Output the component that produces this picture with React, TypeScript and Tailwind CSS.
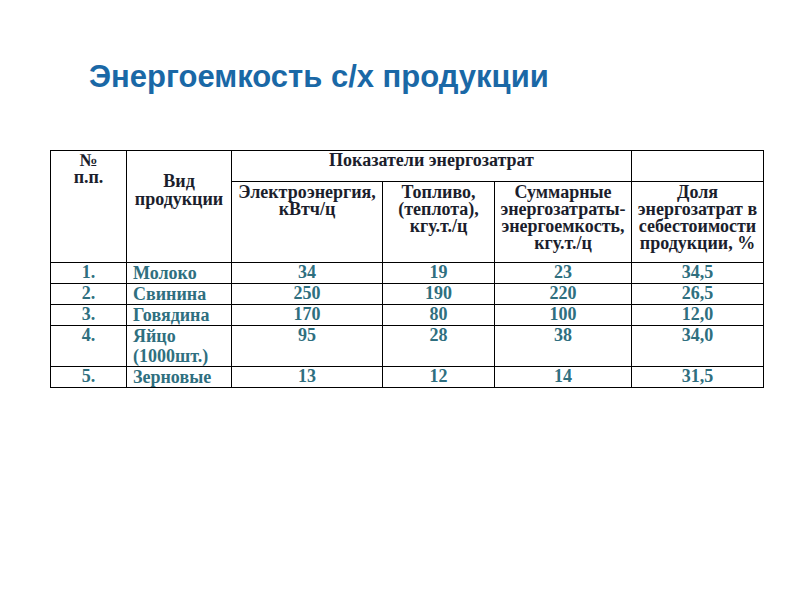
import React from "react";

const rows = [
  ["1.", "Молоко", "34", "19", "23", "34,5"],
  ["2.", "Свинина", "250", "190", "220", "26,5"],
  ["3.", "Говядина", "170", "80", "100", "12,0"],
  ["4.", "Яйцо\n(1000шт.)", "95", "28", "38", "34,0"],
  ["5.", "Зерновые", "13", "12", "14", "31,5"],
];

const heights = ["h-[21px]", "h-[20px]", "h-[21px]", "h-[40px]", "h-[21px]"];

export default function App() {
  const cell = "border border-black align-top p-0";
  return (
    <div className="w-[800px] h-[600px] bg-white relative overflow-hidden">
      <div className="pl-[89px] pt-[59px] h-[150px]">
        <h1 className="text-[31px] leading-[36px] font-bold text-[#1a68a6] font-['Liberation_Sans',Arial,sans-serif]">
          Энергоемкость с/х продукции
        </h1>
      </div>
      <div className="pl-[50px]">
        <table className="border-collapse table-fixed font-['Liberation_Serif','Times_New_Roman',serif] font-bold text-[18px] leading-[17px]">
          <colgroup>
            <col className="w-[76px]" />
            <col className="w-[105px]" />
            <col className="w-[151px]" />
            <col className="w-[112px]" />
            <col className="w-[137px]" />
            <col className="w-[132px]" />
          </colgroup>
          <thead className="text-[#1b1e2c]">
            <tr className="h-[31px]">
              <td rowSpan={2} className={`${cell} text-center pt-[1px]`}>
                <div className="leading-[17px]">№<br />п.п.</div>
              </td>
              <td rowSpan={2} className={`${cell} text-center pt-[21px]`}>
                <div className="leading-[18px]">Вид<br />продукции</div>
              </td>
              <td colSpan={3} className={`${cell} text-center pt-[1px]`}>
                Показатели энергозатрат
              </td>
              <td className={cell}></td>
            </tr>
            <tr className="h-[81px]">
              <td className={`${cell} text-center pt-[2px]`}>
                <div>Электроэнергия,<br />кВтч/ц</div>
              </td>
              <td className={`${cell} text-center pt-[2px]`}>
                <div>Топливо,<br />(теплота),<br />кгу.т./ц</div>
              </td>
              <td className={`${cell} text-center pt-[2px]`}>
                <div>Суммарные<br />энергозатраты-<br />энергоемкость,<br />кгу.т./ц</div>
              </td>
              <td className={`${cell} text-center pt-[2px]`}>
                <div>Доля<br />энергозатрат в<br />себестоимости<br />продукции, %</div>
              </td>
            </tr>
          </thead>
          <tbody className="text-[#2f6f7f] leading-[19px]">
            {rows.map((r, i) => (
              <tr key={i} className={heights[i]}>
                <td className={`${cell} text-center`}>{r[0]}</td>
                <td className={`${cell} text-left pl-[6px] whitespace-pre-line leading-[20px]`}>{r[1]}</td>
                <td className={`${cell} text-center`}>{r[2]}</td>
                <td className={`${cell} text-center`}>{r[3]}</td>
                <td className={`${cell} text-center`}>{r[4]}</td>
                <td className={`${cell} text-center`}>{r[5]}</td>
              </tr>
            ))}
          </tbody>
        </table>
      </div>
    </div>
  );
}
